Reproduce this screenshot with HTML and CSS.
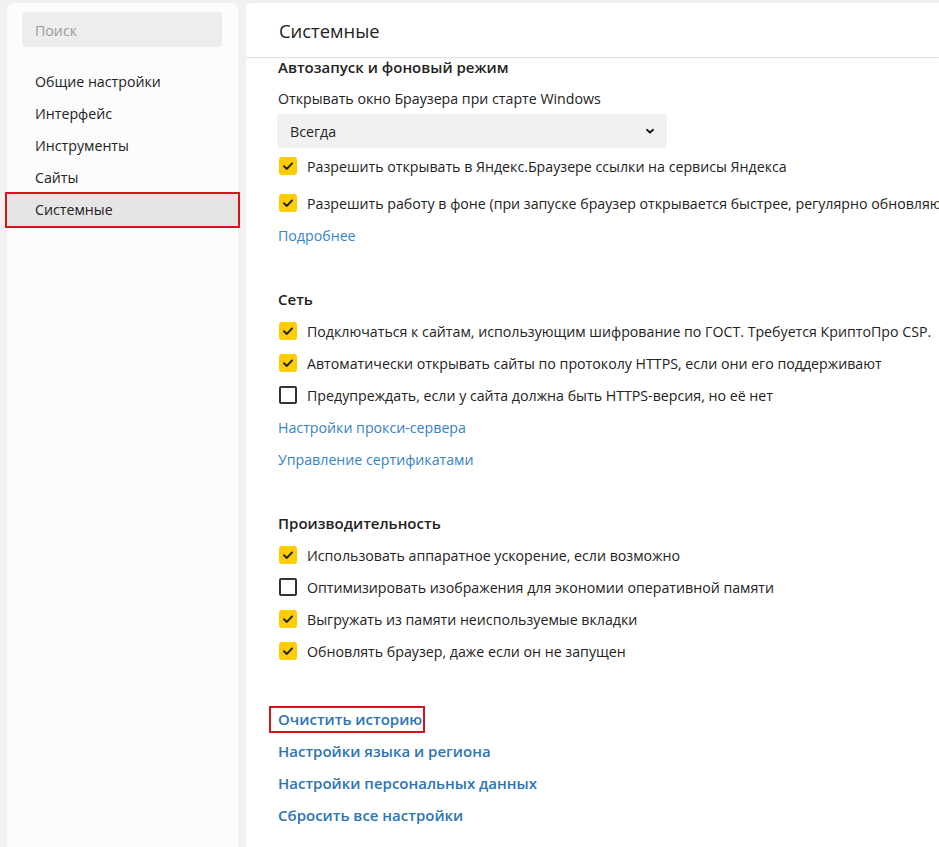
FILE: index.html
```html
<!DOCTYPE html>
<html lang="ru">
<head>
<meta charset="utf-8">
<title>Настройки — Системные</title>
<link rel="stylesheet" href="styles.css">
</head>
<body>
<div class="page">
  <aside class="sidebar">
    <div class="search">Поиск</div>
    <nav class="nav">
      <div class="nav-item">Общие настройки</div>
      <div class="nav-item">Интерфейс</div>
      <div class="nav-item">Инструменты</div>
      <div class="nav-item">Сайты</div>
      <div class="nav-item selected">Системные</div>
    </nav>
  </aside>
  <main class="main">
    <header class="main-header">Системные</header>
    <div class="content">
      <section class="section first">
        <div class="heading top">Автозапуск и фоновый режим</div>
        <div class="row">Открывать окно Браузера при старте Windows</div>
        <div class="select"><span>Всегда</span>
          <svg class="chev" width="10" height="7" viewBox="0 0 10 7"><path d="M2 1.8 L5 4.6 L8 1.8" fill="none" stroke="#111" stroke-width="1.9" stroke-linecap="round" stroke-linejoin="round"/></svg>
        </div>
        <div class="row check gap2"><span class="cb on"><svg width="18" height="18" viewBox="0 0 18 18"><path d="M5 9.2 L7.9 11.9 L13 6.4" fill="none" stroke="#222" stroke-width="2" stroke-linecap="round" stroke-linejoin="round"/></svg></span>Разрешить открывать в Яндекс.Браузере ссылки на сервисы Яндекса</div>
        <div class="row check gap5"><span class="cb on"><svg width="18" height="18" viewBox="0 0 18 18"><path d="M5 9.2 L7.9 11.9 L13 6.4" fill="none" stroke="#222" stroke-width="2" stroke-linecap="round" stroke-linejoin="round"/></svg></span><span class="clip">Разрешить работу в фоне (при запуске браузер открывается быстрее, регулярно обновляю</span></div>
        <div class="row"><a class="link">Подробнее</a></div>
      </section>
      <section class="section">
        <div class="heading">Сеть</div>
        <div class="row check"><span class="cb on"><svg width="18" height="18" viewBox="0 0 18 18"><path d="M5 9.2 L7.9 11.9 L13 6.4" fill="none" stroke="#222" stroke-width="2" stroke-linecap="round" stroke-linejoin="round"/></svg></span>Подключаться к сайтам, использующим шифрование по ГОСТ. Требуется КриптоПро CSP.</div>
        <div class="row check"><span class="cb on"><svg width="18" height="18" viewBox="0 0 18 18"><path d="M5 9.2 L7.9 11.9 L13 6.4" fill="none" stroke="#222" stroke-width="2" stroke-linecap="round" stroke-linejoin="round"/></svg></span>Автоматически открывать сайты по протоколу HTTPS, если они его поддерживают</div>
        <div class="row check"><span class="cb"></span>Предупреждать, если у сайта должна быть HTTPS-версия, но её нет</div>
        <div class="row"><a class="link">Настройки прокси-сервера</a></div>
        <div class="row"><a class="link">Управление сертификатами</a></div>
      </section>
      <section class="section">
        <div class="heading">Производительность</div>
        <div class="row check"><span class="cb on"><svg width="18" height="18" viewBox="0 0 18 18"><path d="M5 9.2 L7.9 11.9 L13 6.4" fill="none" stroke="#222" stroke-width="2" stroke-linecap="round" stroke-linejoin="round"/></svg></span>Использовать аппаратное ускорение, если возможно</div>
        <div class="row check"><span class="cb"></span>Оптимизировать изображения для экономии оперативной памяти</div>
        <div class="row check"><span class="cb on"><svg width="18" height="18" viewBox="0 0 18 18"><path d="M5 9.2 L7.9 11.9 L13 6.4" fill="none" stroke="#222" stroke-width="2" stroke-linecap="round" stroke-linejoin="round"/></svg></span>Выгружать из памяти неиспользуемые вкладки</div>
        <div class="row check"><span class="cb on"><svg width="18" height="18" viewBox="0 0 18 18"><path d="M5 9.2 L7.9 11.9 L13 6.4" fill="none" stroke="#222" stroke-width="2" stroke-linecap="round" stroke-linejoin="round"/></svg></span>Обновлять браузер, даже если он не запущен</div>
      </section>
      <section class="section actions">
        <div class="row"><span class="mark"><a class="link strong">Очистить историю</a></span></div>
        <div class="row"><a class="link strong">Настройки языка и региона</a></div>
        <div class="row"><a class="link strong">Настройки персональных данных</a></div>
        <div class="row"><a class="link strong">Сбросить все настройки</a></div>
      </section>
    </div>
  </main>
</div>
</body>
</html>
```

FILE: styles.css
```css
html, body {
  margin: 0;
  padding: 0;
  height: 100%;
  overflow: hidden;
}
body {
  background: #f1f1f1;
  font-family: "Open Sans", "Noto Sans", "Liberation Sans", sans-serif;
  font-size: 14.2px;
  color: #222;
}
.page {
  display: flex;
  gap: 8px;
  padding: 3px 0 0 7px;
  height: 100%;
  box-sizing: border-box;
}
.sidebar {
  flex: 0 0 231px;
  background: #fcfcfc;
  border-radius: 6px 6px 0 0;
  padding-top: 9px;
  box-sizing: border-box;
}
.search {
  margin-left: 15px;
  width: 200px;
  height: 35px;
  background: #eeedee;
  border-radius: 4px;
  box-sizing: border-box;
  padding-left: 13px;
  line-height: 38px;
  color: #9a9a9a;
  overflow: hidden;
}
.nav {
  margin-top: 19px;
}
.nav-item {
  height: 32px;
  line-height: 32px;
  padding-left: 28px;
  white-space: nowrap;
}
.nav-item.selected {
  background: #e6e5e6;
  outline: 2px solid #d5151c;
  outline-offset: 0;
}
.main {
  flex: 0 0 693px;
  background: #fff;
  border-radius: 6px 0 0 0;
  box-sizing: border-box;
  overflow: hidden;
}
.main-header {
  height: 54px;
  line-height: 56px;
  padding-left: 33px;
  font-size: 18.4px;
  color: #222;
  border-bottom: 1px solid #e2e2e2;
  box-shadow: 0 1px 2px rgba(0,0,0,0.04);
}
.content {
  padding-left: 32px;
}
.section {
  margin-top: 32px;
}
.section.first {
  margin-top: 0;
}
.section.actions {
  margin-top: 36px;
}
.heading {
  height: 32px;
  line-height: 32px;
  font-weight: 600;
  font-size: 15px;
  white-space: nowrap;
}
.heading.top {
  height: 24px;
  line-height: 18px;
}
.row {
  height: 32px;
  display: flex;
  align-items: center;
  white-space: nowrap;
}
.row.gap2 { margin-top: 2px; }
.row.gap5 { margin-top: 5px; }
.clip {
  overflow: hidden;
}
.check {
  padding-left: 1px;
}
.cb {
  flex: 0 0 18px;
  width: 18px;
  height: 18px;
  box-sizing: border-box;
  border: 2px solid #333;
  border-radius: 2px;
  margin-right: 10px;
  display: flex;
}
.cb.on {
  background: #ffcc00;
  border: none;
  border-radius: 3px;
}
.select {
  width: 390px;
  height: 34px;
  background: #f1f1f1;
  border-radius: 4px;
  display: flex;
  align-items: center;
  justify-content: space-between;
  padding: 0 12px 0 13px;
  box-sizing: border-box;
  margin-left: -1px;
}
.chev {
  display: block;
}
.link {
  color: #3583c5;
  cursor: pointer;
}
.link.strong {
  color: #2a74b7;
  font-weight: 600;
  font-size: 15px;
}
.mark {
  display: inline-block;
  margin-left: -9px;
  padding: 2px 1px 2px 7px;
  border: 2px solid #d5151c;
  line-height: 18px;
}
```
